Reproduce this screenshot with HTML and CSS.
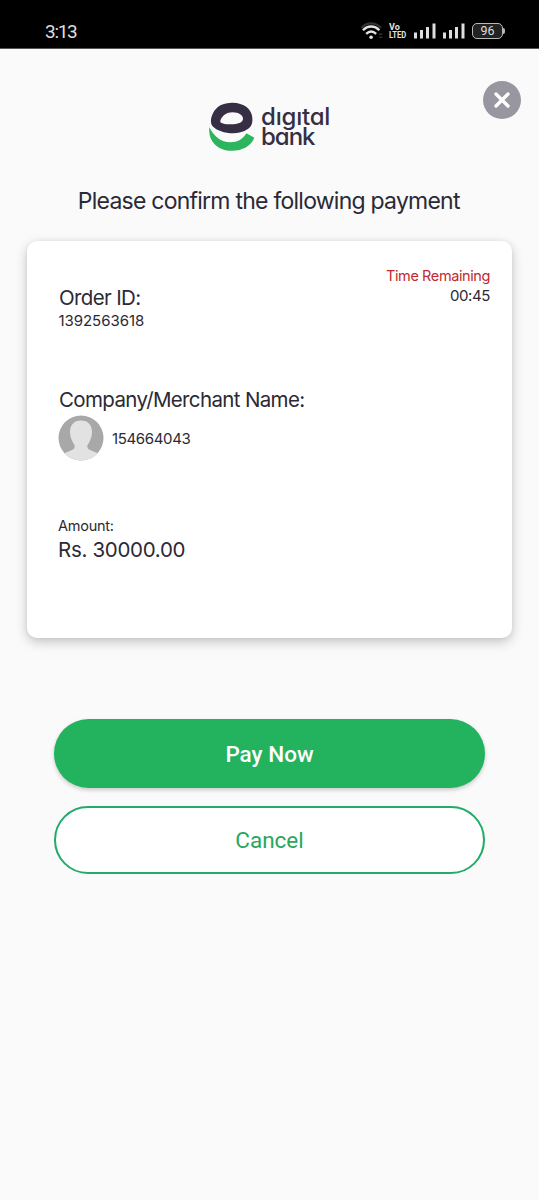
FILE: index.html
```html
<!DOCTYPE html>
<html lang="en">
<head>
<meta charset="utf-8">
<title>Confirm payment</title>
<link rel="stylesheet" href="styles.css">
</head>
<body>
<div class="screen">
  <header class="status">
    <span class="clock">3:13</span>
    <div class="indicators">
      <svg class="wifi" width="26" height="19" viewBox="0 0 24 18" fill="none" stroke-linecap="butt">
        <path d="M1 5.600C6-.2 14.500-.2 19.500 5.600" stroke="#333" stroke-width="2"/>
        <path d="M2.500 7.800C7 3.100 13.500 3.100 18 7.800" stroke="#e4e4e4" stroke-width="2.200"/>
        <path d="M5.500 11.300C8.500 8.400 12 8.400 15 11.300" stroke="#e4e4e4" stroke-width="2.200"/>
        <circle cx="10.200" cy="14.500" r="1.700" fill="#e4e4e4"/>
        <path d="M17.500 11.500h3.500M17.500 14.500h3.500" stroke="#292929" stroke-width="1.500"/>
      </svg>
      <div class="volte"><span class="volte-top">Vo</span><span class="volte-bottom">LTED</span></div>
      <svg class="signal" width="22" height="16" viewBox="0 0 22 16" fill="#dedede"><path d="M0 9.500h3V15.500H0zM6 7h3v8.500H6zM12 4h3v11.500h-3zM18.500.500h3v15h-3z"/></svg>
      <svg class="signal" width="22" height="16" viewBox="0 0 22 16" fill="#dedede"><path d="M0 9.500h3V15.500H0zM6 7h3v8.500H6zM12 4h3v11.500h-3zM18.500.500h3v15h-3z"/></svg>
      <div class="battery"><span class="battery-body">96</span><span class="battery-tip"></span></div>
    </div>
  </header>

  <main class="content">
    <div class="brand">
      <svg class="mark" width="46" height="50" viewBox="27 36 138 150">
        <path fill="#362e42" fill-rule="evenodd" d="M38 109C31 101 31 85 39 70C49 48 70 38 97 38C132 38 156 57 157 84C158 94 156 103 152 109C145 119 127 129 100 130C73 130 50 122 38 109ZM61 92C66 77 80 67 98 67C116 67 129 76 129 86C129 97 113 103 93 103C75 103 58 100 61 92Z"/>
        <path fill="#2cb55c" d="M28 112C42 140 63 157 91 157C112 157 130 147 139 130L163 143C153 168 127 182 96 182C52 182 24 153 28 112Z"/>
      </svg>
      <div class="wordmark" aria-label="digital bank"><span class="word-top">dıgıtal</span><span class="word-bottom">bank</span></div>
    </div>
    <button class="close" aria-label="Close">
      <svg width="38" height="38" viewBox="0 0 38 38"><path d="M13 13L25 25M25 13L13 25" stroke="#fff" stroke-width="3.300" stroke-linecap="round"/></svg>
    </button>

    <h1 class="title"><span>Please confirm the following payment</span></h1>

    <section class="card">
      <div class="timer">
        <span class="timer-label">Time Remaining</span>
        <span class="timer-value">00:45</span>
      </div>
      <div class="order">
        <span class="label order-label">Order ID:</span>
        <span class="value order-value">1392563618</span>
      </div>
      <div class="merchant">
        <span class="label merchant-label">Company/Merchant Name:</span>
        <div class="merchant-row">
          <svg class="avatar" width="46" height="46" viewBox="0 0 46 46">
            <defs><clipPath id="round"><circle cx="23" cy="23" r="22.500"/></clipPath></defs>
            <g clip-path="url(#round)">
              <path fill="#a8a8a8" d="M0 0h46v46H0z"/>
              <path fill="#e2e2e2" d="M23 5.500c7 0 11 4.500 11 11.500 0 3-.8 6-2 8.500-.8 2-1.700 3.500-2.500 4.500-.5 2.500 0 4 2.500 5L41.500 39v8h-37v-8l9.500-4c2.500-1 3-2.500 2.500-5-.8-1-1.700-2.500-2.500-4.500-1.200-2.500-2-5.500-2-8.500C12 10 16 5.500 23 5.500z"/>
            </g>
          </svg>
          <span class="value merchant-value">154664043</span>
        </div>
      </div>
      <div class="amount">
        <span class="value amount-label">Amount:</span>
        <span class="label amount-value">Rs. 30000.00</span>
      </div>
    </section>

    <div class="actions">
      <button class="button pay">Pay Now</button>
      <button class="button cancel">Cancel</button>
    </div>
  </main>
</div>
</body>
</html>
```

FILE: styles.css
```css
* { box-sizing: border-box; }
body { margin: 0; background: #fafafa; color: #2b2935; font-family: Inter, "Noto Sans", sans-serif; }
button { padding: 0; border: 0; font: inherit; }
.screen { width: 539px; height: 1200px; background: #fafafa; overflow: hidden; }

.status { display: flex; justify-content: space-between; height: 49px; padding: 13px 34px 0 45px; background: #000; border-bottom: 1px solid #555; }
.clock { color: #dedede; font: 400 19px/37px Roboto, sans-serif; letter-spacing: -1.3px; }
.indicators { display: flex; height: 36px; align-items: center; }
.volte { display: flex; flex-direction: column; width: 19px; margin-left: 3px; color: #e4e4e4; font: 700 9.500px/8px Roboto, sans-serif; }
.volte-top { transform: scaleX(.95); transform-origin: left; }
.volte-bottom { transform: scaleX(.8); transform-origin: left; white-space: nowrap; }
.signal { margin-left: 6.500px; }
.volte + .signal { margin-left: 6px; }
.battery { display: flex; align-items: center; margin-left: 7.500px; }
.battery-body { width: 31px; height: 16px; border: 1.500px solid #b9b9b9; border-radius: 5px; background: #222; color: #ddd; font: 400 12.500px/14px Roboto, sans-serif; text-align: center; }
.battery-tip { width: 2px; height: 6px; background: #b9b9b9; border-radius: 0 2px 2px 0; }

.content { position: relative; display: flex; flex-direction: column; padding: 53px 27px 0; }
.brand { display: flex; height: 50px; padding-left: 182px; }
.wordmark { display: flex; flex-direction: column; padding-top: 5px; margin-left: 6px; color: #362e42; font: 500 24px/20px Inter, sans-serif; font-feature-settings: "cv11"; }
.word-top { letter-spacing: -0.2px; }
.word-bottom { letter-spacing: -1px; }
.close { position: absolute; top: 32px; right: 18px; width: 38px; height: 38px; border-radius: 50%; background: #9896a0; }
.close svg { display: block; }
.title { margin: 31.500px 0 0; font-size: 23px; line-height: 34px; font-weight: 400; text-align: center; letter-spacing: -0.76px; white-space: nowrap; }
.title span { margin-right: 1.500px; }

.card { position: relative; height: 397px; margin-top: 23.500px; padding: 44px 32px 0; background: #fff; border-radius: 10px; box-shadow: 0 4px 12px rgba(0,0,0,.22), 0 0 4px rgba(0,0,0,.05); }
.timer { position: absolute; top: 25px; right: 22px; display: flex; flex-direction: column; align-items: flex-end; font-size: 15px; line-height: 20px; }
.timer-label { color: #c02a2e; font-size: 14.500px; letter-spacing: -0.4px; }
.timer-value { letter-spacing: -0.4px; }
.order, .merchant, .amount { display: flex; flex-direction: column; align-items: flex-start; }
.label { font-size: 20.500px; line-height: 26px; letter-spacing: -0.64px; }
.value { font-size: 15px; line-height: 20px; }
.order-value { margin-left: -0.500px; letter-spacing: -0.05px; }
.merchant { margin-top: 56px; }
.merchant-row { display: flex; align-items: center; gap: 8px; margin-top: 1.500px; margin-left: -1px; }
.merchant-value { padding-top: 2px; letter-spacing: -0.35px; }
.amount { margin-top: 55.500px; }
.amount-label { margin-left: -1px; font-size: 14.500px; letter-spacing: -0.25px; }
.amount-value { margin-top: 1px; margin-left: -1px; letter-spacing: -0.3px; }

.actions { display: flex; flex-direction: column; gap: 18px; margin: 80.500px 27px 0; }
.button { height: 69px; padding-top: 1px; border-radius: 35px; font-family: Roboto, sans-serif; font-size: 22.500px; }
.pay { background: #23b25d; color: #fff; font-weight: 500; box-shadow: 0 2px 4px rgba(0,0,0,.2); }
.cancel { height: 68.500px; border: 2px solid #22ab68; background: #fff; color: #27a75d; }
```
